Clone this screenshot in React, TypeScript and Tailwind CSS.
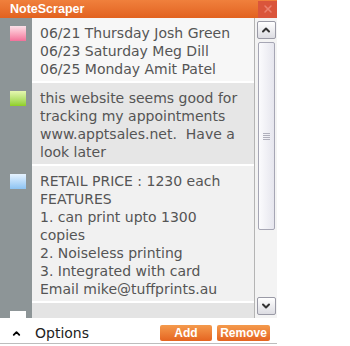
import { ChevronUp, ChevronDown, X } from "lucide-react";

const notes = [
  {
    id: 1,
    swatch: "bg-gradient-to-b from-[#fbe0e8] to-[#f2709a]",
    bg: "bg-[#f7f7f7]",
    lines: ["06/21 Thursday Josh Green", "06/23 Saturday Meg Dill", "06/25 Monday Amit Patel"],
  },
  {
    id: 2,
    swatch: "bg-gradient-to-b from-[#e6f7b0] to-[#8fcf1e]",
    bg: "bg-[#e6e6e6]",
    lines: ["this website seems good for", "tracking my appointments", "www.apptsales.net.  Have a", "look later"],
  },
  {
    id: 3,
    swatch: "bg-gradient-to-b from-[#e6f3ff] to-[#8cc3f3]",
    bg: "bg-[#f1f1f1]",
    lines: [
      "RETAIL PRICE : 1230 each",
      "FEATURES",
      "1. can print upto 1300",
      "copies",
      "2. Noiseless printing",
      "3. Integrated with card",
      "Email mike@tuffprints.au",
    ],
  },
  {
    id: 4,
    swatch: "bg-white",
    bg: "bg-[#e4e4e4]",
    lines: ["", ""],
  },
];

const NoteScraper = () => {
  return (
    <div className="w-[350px] h-[346px] bg-white font-['DejaVu_Sans',sans-serif]">
      <div className="w-[277px] h-[346px] flex flex-col">
        {/* title bar */}
        <div className="h-[18px] flex items-center justify-between bg-gradient-to-b from-[#f0803c] to-[#e2621f]">
          <span className="pl-[10px] text-white text-[12.5px] font-bold font-['Liberation_Sans',sans-serif] leading-none">
            NoteScraper
          </span>
          <button className="w-[19px] h-[17px] flex items-center justify-center bg-[#da553b]">
            <X className="w-3 h-3 text-[#ec8270]" strokeWidth={3} />
          </button>
        </div>

        {/* notes + scrollbar */}
        <div className="h-[300px] flex overflow-hidden">
          <div className="w-[254px] bg-[#8d9597] overflow-hidden">
            {notes.map((note) => (
              <div key={note.id} className="flex">
                <div className="w-[32px] shrink-0 pl-[10px] pt-[8px]">
                  <div className={`w-[16px] h-[15px] ${note.swatch}`} />
                </div>
                <div
                  className={`flex-1 ${note.bg} border-b-2 border-white pl-[8px] pr-[4px] pt-[6px] pb-[3px] text-[14px] leading-[18px] text-[#555]`}
                >
                  {note.lines.map((line, i) => (
                    <div key={i} className="whitespace-pre h-[18px]">
                      {line}
                    </div>
                  ))}
                </div>
              </div>
            ))}
          </div>

          <div className="w-[23px] bg-[#f3f3f3] border-l border-[#b4b4b4] flex flex-col items-center pt-[3px] pb-[3px]">
            <div className="w-[19px] h-[18px] rounded-[2px] border border-[#9a9aa6] bg-gradient-to-b from-white to-[#dcdce2] flex items-center justify-center">
              <ChevronUp className="w-3 h-3 text-[#333]" strokeWidth={4} />
            </div>
            <div className="mt-[3px] w-[17px] h-[188px] rounded-[2px] border border-[#a6a6b4] bg-gradient-to-r from-[#fbfbfd] to-[#e6e6ee] flex items-center justify-center">
              <div className="flex flex-col gap-[1px]">
                <div className="w-[7px] h-px bg-[#b0b0bc]" />
                <div className="w-[7px] h-px bg-[#b0b0bc]" />
                <div className="w-[7px] h-px bg-[#b0b0bc]" />
                <div className="w-[7px] h-px bg-[#b0b0bc]" />
              </div>
            </div>
            <div className="flex-1" />
            <div className="w-[19px] h-[18px] rounded-[2px] border border-[#9a9aa6] bg-gradient-to-b from-white to-[#dcdce2] flex items-center justify-center">
              <ChevronDown className="w-3 h-3 text-[#333]" strokeWidth={4} />
            </div>
          </div>
        </div>

        {/* options bar */}
        <div className="h-[26px] pt-[5px] flex items-center border-b border-[#bdbdbd]">
          <ChevronUp className="ml-[11px] w-[11px] h-[11px] text-black" strokeWidth={4} />
          <span className="ml-[13px] text-[14px] text-[#222]">Options</span>
          <div className="ml-auto mr-[7px] flex gap-[5px]">
            <button className="w-[52px] h-[16px] rounded-[2px] bg-gradient-to-b from-[#f49a4c] to-[#e5641f] text-white text-[12px] font-bold font-['Liberation_Sans',sans-serif] leading-[16px]">
              Add
            </button>
            <button className="w-[53px] h-[16px] rounded-[2px] bg-gradient-to-b from-[#f49a4c] to-[#e5641f] text-white text-[12px] font-bold font-['Liberation_Sans',sans-serif] leading-[16px]">
              Remove
            </button>
          </div>
        </div>
      </div>
    </div>
  );
};

export default NoteScraper;
